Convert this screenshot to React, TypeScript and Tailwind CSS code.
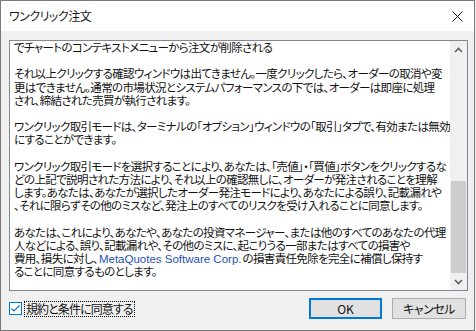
import React from "react";

const JP = "font-['Noto_Sans_CJK_JP',sans-serif] [font-feature-settings:'palt']";

type Seg = string | { blue: string };
const paragraphs: Seg[][][] = [
  [["でチャートのコンテキストメニューから注文が削除される"]],
  [
    ["それ以上クリックする確認ウィンドウは出てきません。一度クリックしたら、オーダーの取消や変"],
    ["更はできません。通常の市場状況とシステムパフォーマンスの下では、オーダーは即座に処理"],
    ["され、締結された売買が執行されます。"],
  ],
  [
    ["ワンクリック取引モードは、ターミナルの「オプション」ウィンドウの「取引」タブで、有効または無効"],
    ["にすることができます。"],
  ],
  [
    ["ワンクリック取引モードを選択することにより、あなたは、「売値」・「買値」ボタンをクリックするな"],
    ["どの上記で説明された方法により、それ以上の確認無しに、オーダーが発注されることを理解"],
    ["します。あなたは、あなたが選択したオーダー発注モードにより、あなたによる誤り、記載漏れや"],
    ["、それに限らずその他のミスなど、発注上のすべてのリスクを受け入れることに同意します。"],
  ],
  [
    ["あなたは、これにより、あなたや、あなたの投資マネージャー、または他のすべてのあなたの代理"],
    ["人などによる、誤り、記載漏れや、その他のミスに、起こりうる一部またはすべての損害や"],
    ["費用、損失に対し、", { blue: "MetaQuotes Software Corp." }, "の損害責任免除を完全に補償し保持す"],
    ["ることに同意するものとします。"],
  ],
];

function Line({ segs }: { segs: Seg[] }) {
  return (
    <div className="h-[13.2px] whitespace-nowrap leading-[13.2px]">
      {segs.map((s, i) =>
        typeof s === "string" ? (
          <span key={i}>{s}</span>
        ) : (
          <span
            key={i}
            className="mx-[1px] font-['Liberation_Sans',sans-serif] text-[11.5px] tracking-normal text-[#1f4fb4]"
          >
            {s.blue}
          </span>
        )
      )}
    </div>
  );
}

export default function App() {
  return (
    <div className="h-[331px] w-[476px] overflow-hidden bg-[#f0f0f0]">
      <div className={`flex h-[331px] w-[475px] flex-col border border-[#7a7a7a] bg-[#f0f0f0] text-black ${JP}`}>
        {/* title bar */}
        <div className="flex h-[30px] shrink-0 items-center justify-between bg-white pl-[8px] pr-[10px]">
          <span className="text-[12px] tracking-[-0.5px] text-[#1a1a1a]">ワンクリック注文</span>
          <svg width="11" height="11" viewBox="0 0 11 11" className="mr-[1px]">
            <path d="M0.5 0.5 L10.5 10.5 M10.5 0.5 L0.5 10.5" stroke="#111" strokeWidth="1" />
          </svg>
        </div>

        {/* body */}
        <div className="flex flex-1 flex-col pl-[8px] pr-[6px] pt-[9px]">
          <div className="flex h-[251px] border border-[#828790] bg-white">
            <div className="flex-1 overflow-hidden pl-[4px] text-[11.5px] tracking-[-0.65px] text-[#111]">
              {paragraphs.map((p, pi) => (
                <div key={pi}>
                  {pi > 0 && <div className="h-[13.2px]" />}
                  {p.map((l, li) => (
                    <Line key={li} segs={l} />
                  ))}
                </div>
              ))}
            </div>
            {/* scrollbar */}
            <div className="flex w-[17px] flex-col bg-[#f0f0f0]">
              <div className="flex h-[17px] items-center justify-center">
                <svg width="9" height="6" viewBox="0 0 9 6">
                  <path d="M1 5 L4.5 1.5 L8 5" stroke="#606060" strokeWidth="1.6" fill="none" />
                </svg>
              </div>
              <div className="flex flex-1 flex-col justify-end px-[1px]">
                <div className="h-[92px] bg-[#cdcdcd]" />
              </div>
              <div className="flex h-[17px] items-center justify-center">
                <svg width="9" height="6" viewBox="0 0 9 6">
                  <path d="M1 1 L4.5 4.5 L8 1" stroke="#606060" strokeWidth="1.6" fill="none" />
                </svg>
              </div>
            </div>
          </div>

          {/* bottom row */}
          <div className="mt-[7px] flex items-center justify-between pr-[2px]">
            <div className="flex items-center">
              <div className="flex h-[13px] w-[13px] items-center justify-center border border-[#0078d7] bg-white">
                <svg width="11" height="11" viewBox="0 0 11 11">
                  <path d="M1.5 5.5 L4 8 L9.5 2.5" stroke="#0078d7" strokeWidth="1.2" fill="none" />
                </svg>
              </div>
              <span className="ml-[2px] border border-dotted border-black px-[1px] text-[12px] leading-[14px] tracking-[-0.9px] text-[#111]">
                規約と条件に同意する
              </span>
            </div>
            <div className="flex gap-[10px]">
              <button className="flex h-[21px] w-[73px] items-center justify-center border-2 border-[#0078d7] bg-[#e1e1e1] text-[12px] text-[#111]">
                OK
              </button>
              <button className="flex h-[21px] w-[74px] items-center justify-center border border-[#adadad] bg-[#e1e1e1] text-[12px] tracking-[-0.5px] text-[#111]">
                キャンセル
              </button>
            </div>
          </div>
        </div>
      </div>
    </div>
  );
}
